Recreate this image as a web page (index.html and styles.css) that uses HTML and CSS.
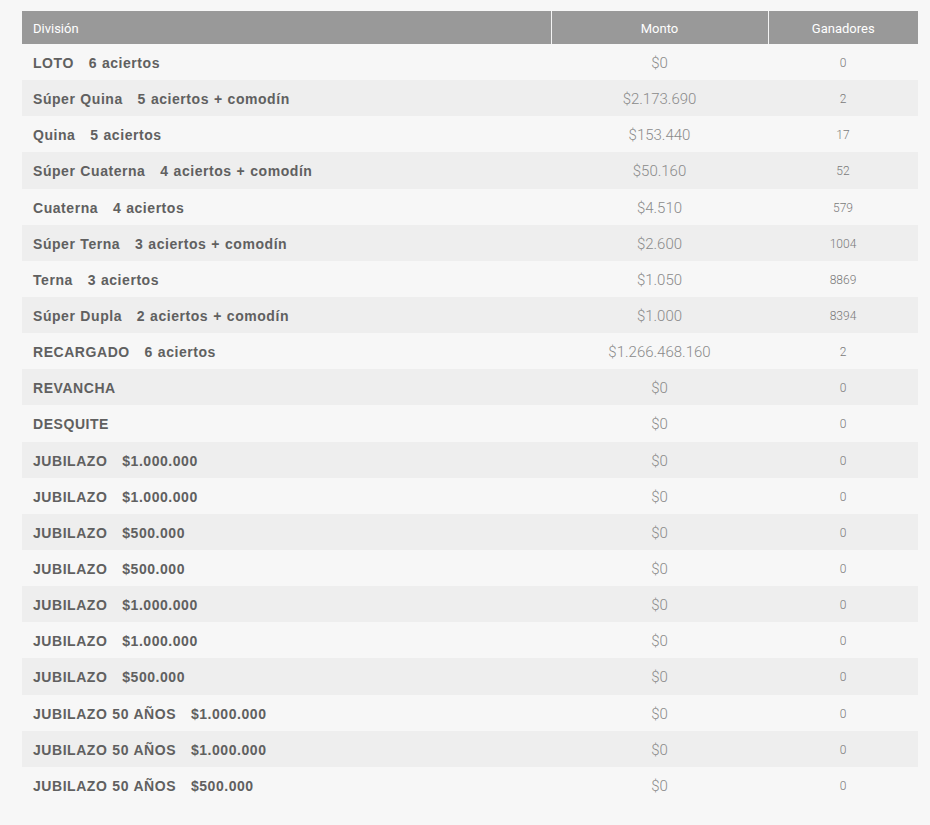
FILE: index.html
```html
<!DOCTYPE html>
<html lang="es">
<head>
<meta charset="utf-8">
<link rel="stylesheet" href="styles.css">
</head>
<body>
<div class="wrap">
<table class="results">
<colgroup><col class="w-div"><col class="w-monto"><col class="w-gan"></colgroup>
<thead>
<tr><th class="c-div">División</th><th class="c-monto">Monto</th><th class="c-gan">Ganadores</th></tr>
</thead>
<tbody>
<tr><td class="c-div">LOTO&nbsp;&nbsp; 6 aciertos</td><td class="c-monto">$0</td><td class="c-gan">0</td></tr>
<tr><td class="c-div">Súper Quina&nbsp;&nbsp; 5 aciertos + comodín</td><td class="c-monto">$2.173.690</td><td class="c-gan">2</td></tr>
<tr><td class="c-div">Quina&nbsp;&nbsp; 5 aciertos</td><td class="c-monto">$153.440</td><td class="c-gan">17</td></tr>
<tr><td class="c-div">Súper Cuaterna&nbsp;&nbsp; 4 aciertos + comodín</td><td class="c-monto">$50.160</td><td class="c-gan">52</td></tr>
<tr><td class="c-div">Cuaterna&nbsp;&nbsp; 4 aciertos</td><td class="c-monto">$4.510</td><td class="c-gan">579</td></tr>
<tr><td class="c-div">Súper Terna&nbsp;&nbsp; 3 aciertos + comodín</td><td class="c-monto">$2.600</td><td class="c-gan">1004</td></tr>
<tr><td class="c-div">Terna&nbsp;&nbsp; 3 aciertos</td><td class="c-monto">$1.050</td><td class="c-gan">8869</td></tr>
<tr><td class="c-div">Súper Dupla&nbsp;&nbsp; 2 aciertos + comodín</td><td class="c-monto">$1.000</td><td class="c-gan">8394</td></tr>
<tr><td class="c-div">RECARGADO&nbsp;&nbsp; 6 aciertos</td><td class="c-monto">$1.266.468.160</td><td class="c-gan">2</td></tr>
<tr><td class="c-div">REVANCHA</td><td class="c-monto">$0</td><td class="c-gan">0</td></tr>
<tr><td class="c-div">DESQUITE</td><td class="c-monto">$0</td><td class="c-gan">0</td></tr>
<tr><td class="c-div">JUBILAZO&nbsp;&nbsp; $1.000.000</td><td class="c-monto">$0</td><td class="c-gan">0</td></tr>
<tr><td class="c-div">JUBILAZO&nbsp;&nbsp; $1.000.000</td><td class="c-monto">$0</td><td class="c-gan">0</td></tr>
<tr><td class="c-div">JUBILAZO&nbsp;&nbsp; $500.000</td><td class="c-monto">$0</td><td class="c-gan">0</td></tr>
<tr><td class="c-div">JUBILAZO&nbsp;&nbsp; $500.000</td><td class="c-monto">$0</td><td class="c-gan">0</td></tr>
<tr><td class="c-div">JUBILAZO&nbsp;&nbsp; $1.000.000</td><td class="c-monto">$0</td><td class="c-gan">0</td></tr>
<tr><td class="c-div">JUBILAZO&nbsp;&nbsp; $1.000.000</td><td class="c-monto">$0</td><td class="c-gan">0</td></tr>
<tr><td class="c-div">JUBILAZO&nbsp;&nbsp; $500.000</td><td class="c-monto">$0</td><td class="c-gan">0</td></tr>
<tr><td class="c-div">JUBILAZO 50 AÑOS&nbsp;&nbsp; $1.000.000</td><td class="c-monto">$0</td><td class="c-gan">0</td></tr>
<tr><td class="c-div">JUBILAZO 50 AÑOS&nbsp;&nbsp; $1.000.000</td><td class="c-monto">$0</td><td class="c-gan">0</td></tr>
<tr><td class="c-div">JUBILAZO 50 AÑOS&nbsp;&nbsp; $500.000</td><td class="c-monto">$0</td><td class="c-gan">0</td></tr>
</tbody>
</table>
</div>
</body>
</html>
```
FILE: styles.css
```css
html, body {
  margin: 0;
  padding: 0;
  background: #f7f7f7;
}
.wrap {
  padding: 11px 12px 20px 22px;
}
.results {
  width: 896px;
  border-collapse: collapse;
  table-layout: fixed;
}
.w-div { width: 529px; }
.w-monto { width: 217px; }
.w-gan { width: 150px; }
.results th {
  background: #999999;
  color: #ffffff;
  font-family: Roboto, "Liberation Sans", sans-serif;
  font-weight: 400;
  font-size: 13px;
  height: 33px;
  padding: 2px 0 0 0;
  border-left: 1px solid #f4f4f4;
  box-sizing: border-box;
}
.results th:first-child {
  border-left: none;
}
.results th.c-div {
  text-align: left;
  padding-left: 11px;
}
.results td {
  height: 36.15px;
  padding: 2px 0 0 0;
  box-sizing: border-box;
  vertical-align: middle;
}
.results tbody tr:nth-child(even) td {
  background: #eeeeee;
}
.results td.c-div {
  padding-left: 11px;
  font-family: "Liberation Sans", Arial, sans-serif;
  font-weight: 700;
  font-size: 14px;
  letter-spacing: 0.55px;
  word-spacing: 0.5px;
  color: #606060;
}
.results td.c-monto {
  text-align: center;
  font-family: Roboto, "Liberation Sans", sans-serif;
  font-weight: 300;
  font-size: 15px;
  color: #8a8a8a;
}
.results td.c-gan {
  text-align: center;
  font-family: Roboto, "Liberation Sans", sans-serif;
  font-weight: 300;
  font-size: 12px;
  color: #7a7a7a;
}
```
